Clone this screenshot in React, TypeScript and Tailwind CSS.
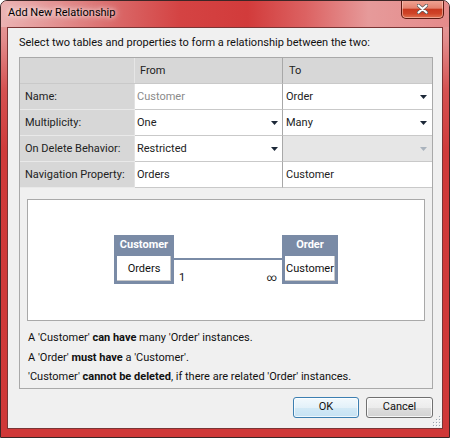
import React from "react";

function Arrow({ disabled }: { disabled?: boolean }) {
  return (
    <svg width="7" height="4" viewBox="0 0 7 4" className="shrink-0">
      <path d="M0 0H7L3.5 4Z" fill={disabled ? "#aab3bd" : "#1c2838"} />
    </svg>
  );
}

function LabelCell({ children }: { children?: React.ReactNode }) {
  return (
    <div className="w-[115px] h-[26px] bg-[#d7d7d7] border-b border-[#e9e9e9] shadow-[inset_-1px_0_0_#e2e2e2] flex items-center pl-[5px] pt-[1px] text-[#222]">
      {children}
    </div>
  );
}

function Row({
  label,
  from,
  to,
  fromGrey,
  fromArrow,
  toArrow,
  toDisabled,
}: {
  label: string;
  from: string;
  to: string;
  fromGrey?: boolean;
  fromArrow?: boolean;
  toArrow?: boolean;
  toDisabled?: boolean;
}) {
  return (
    <div className="flex">
      <LabelCell>{label}</LabelCell>
      <div className="w-[148px] h-[26px] bg-white border-b border-r border-r-[#a8a8a8] border-b-[#c9c9c9] flex items-center pl-[2px] pr-[4px] pt-[1px]">
        <span className={"flex-1 " + (fromGrey ? "text-[#8a8a8a]" : "text-[#222]")}>{from}</span>
        {fromArrow && <Arrow />}
      </div>
      <div
        className={
          "flex-1 h-[26px] border-b border-[#c9c9c9] flex items-center pl-[3px] pr-[5px] pt-[1px] " +
          (toDisabled ? "bg-[#e6e6e6]" : "bg-white")
        }
      >
        <span className="flex-1 text-[#222]">{to}</span>
        {toArrow && <Arrow disabled={toDisabled} />}
      </div>
    </div>
  );
}

function EntityBox({ title, prop }: { title: string; prop: string }) {
  return (
    <div className="bg-[#7a8ba6] flex flex-col px-[3px] pb-[3px]">
      <div className="h-[21px] flex items-center justify-center px-[2px] text-white font-bold text-[11px]">
        {title}
      </div>
      <div className="h-[25px] bg-white flex items-center justify-center px-[1px] pt-[1px] text-[#111] shadow-[inset_-1px_-1px_0_#c8c8c8]">
        {prop}
      </div>
    </div>
  );
}

function Grip() {
  const dots: [number, number][] = [
    [8, 0],
    [8, 3],
    [5, 3],
    [8, 6],
    [5, 6],
    [2, 6],
    [8, 9],
    [5, 9],
    [2, 9],
  ];
  return (
    <svg width="10" height="11" viewBox="0 0 10 11" className="absolute right-[1px] bottom-[1px]">
      {dots.map(([x, y], i) => (
        <g key={i}>
          <rect x={x + 1} y={y + 1} width="1" height="1" fill="#ffffff" />
          <rect x={x} y={y} width="1" height="1" fill="#9aa4ae" />
        </g>
      ))}
    </svg>
  );
}

export default function App() {
  return (
    <div className="w-[450px] h-[438px] font-['Roboto',sans-serif] text-[11px] text-[#111]">
      <div className="relative w-[450px] h-[438px] rounded-t-[7px] border border-[#3d2626] flex flex-col overflow-hidden bg-[linear-gradient(180deg,#e9a7a7_0px,#e28b8b_40px,#d55151_90px,#cf3a3a_150px,#cf3838_100%)]">
        {/* title bar */}
        <div className="h-[26px] shrink-0 flex items-center pl-[7px] bg-[linear-gradient(90deg,#ebb3b3_0%,#e49898_10%,#da6a6a_25%,#d44343_40%,#d23b3b_55%,#dc6262_68%,#e69a9a_82%,#e58b8b_100%)]">
          <span className="text-[11px] text-black [text-shadow:0_0_5px_#fff,0_0_9px_#ffe8e8] mt-[-1px]">
            Add New Relationship
          </span>
        </div>

        {/* close button */}
        <div className="absolute right-[5px] top-[-1px] w-[43px] h-[19px] rounded-b-[5px] border border-t-0 border-[#5c1a12] bg-[linear-gradient(180deg,#f0a696_0%,#e4826f_45%,#c9391f_52%,#cf4327_75%,#e0704f_100%)] shadow-[inset_0_0_0_1px_rgba(255,220,210,0.5)] flex items-center justify-center">
          <svg width="11" height="10" viewBox="0 0 11 10">
            <path d="M1.5 1.5L9.5 8.5M9.5 1.5L1.5 8.5" stroke="#5a5a5a" strokeWidth="3.6" strokeLinecap="round" />
            <path d="M1.5 1.5L9.5 8.5M9.5 1.5L1.5 8.5" stroke="#ffffff" strokeWidth="2" strokeLinecap="round" />
          </svg>
        </div>

        {/* client area */}
        <div className="relative flex-1 mx-[6px] mb-[8px] border border-[#7a3535] bg-[#f0f0f0] flex flex-col">
          <div className="pt-[7px] pl-[11px] h-[23px] leading-[16px] text-[#111]">
            Select two tables and properties to form a relationship between the two:
          </div>

          {/* group */}
          <div className="mt-[6px] ml-[11px] w-[414px] h-[332px] border border-[#a9a9a9] flex flex-col">
            {/* header */}
            <div className="flex">
              <div className="w-[115px] h-[26px] bg-[#d7d7d7] border-b border-[#c9c9c9] shadow-[inset_-1px_0_0_#e6e6e6]" />
              <div className="w-[148px] h-[26px] bg-[#d7d7d7] border-b border-r border-b-[#c9c9c9] border-r-[#a8a8a8] flex items-center pl-[5px] pt-[1px] text-[#222]">
                From
              </div>
              <div className="flex-1 h-[26px] bg-[#d7d7d7] border-b border-[#c9c9c9] flex items-center pl-[6px] pt-[1px] text-[#222]">
                To
              </div>
            </div>
            <Row label="Name:" from="Customer" to="Order" fromGrey toArrow />
            <Row label="Multiplicity:" from="One" to="Many" fromArrow toArrow />
            <Row label="On Delete Behavior:" from="Restricted" to="" fromArrow toArrow toDisabled />
            <Row label="Navigation Property:" from="Orders" to="Customer" />

            {/* diagram */}
            <div className="mt-[11px] mx-[7px] h-[122px] border border-[#a9a9a9] bg-white flex items-center justify-center">
              <div className="flex items-start">
                <div className="w-[60px]">
                  <EntityBox title="Customer" prop="Orders" />
                </div>
                <div className="w-[108px] flex flex-col">
                  <div className="h-[23px]" />
                  <div className="h-[2px] bg-[#7a8ba6]" />
                  <div className="mt-[11px] flex justify-between px-[5px] leading-[14px] text-[#111]">
                    <span>1</span>
                    <span className="text-[10px]">∞</span>
                  </div>
                </div>
                <div className="w-[56px]">
                  <EntityBox title="Order" prop="Customer" />
                </div>
              </div>
            </div>

            {/* descriptions */}
            <div className="mt-[7px] pl-[8px] leading-[19.5px] text-[#111]">
              <div>
                A 'Customer' <b>can have</b> many 'Order' instances.
              </div>
              <div>
                A 'Order' <b>must have</b> a 'Customer'.
              </div>
              <div>
                'Customer' <b>cannot be deleted</b>, if there are related 'Order' instances.
              </div>
            </div>
          </div>

          {/* buttons */}
          <div className="mt-[8px] ml-[11px] w-[414px] flex justify-end gap-[7px]">
            <button className="w-[66px] h-[21px] rounded-[3px] border border-[#3c7fb1] bg-[linear-gradient(180deg,#f2f9fd_0%,#e3f1f9_50%,#d2e9f6_52%,#c6e2f3_100%)] shadow-[inset_0_0_0_1px_rgba(255,255,255,0.7)] text-[#111] text-[11px]">
              OK
            </button>
            <button className="w-[67px] h-[21px] rounded-[3px] border border-[#707070] bg-[linear-gradient(180deg,#f4f4f4_0%,#ececec_50%,#dedede_52%,#d2d2d2_100%)] shadow-[inset_0_0_0_1px_rgba(255,255,255,0.8)] text-[#111] text-[11px]">
              Cancel
            </button>
          </div>

          <Grip />
        </div>
      </div>
    </div>
  );
}
